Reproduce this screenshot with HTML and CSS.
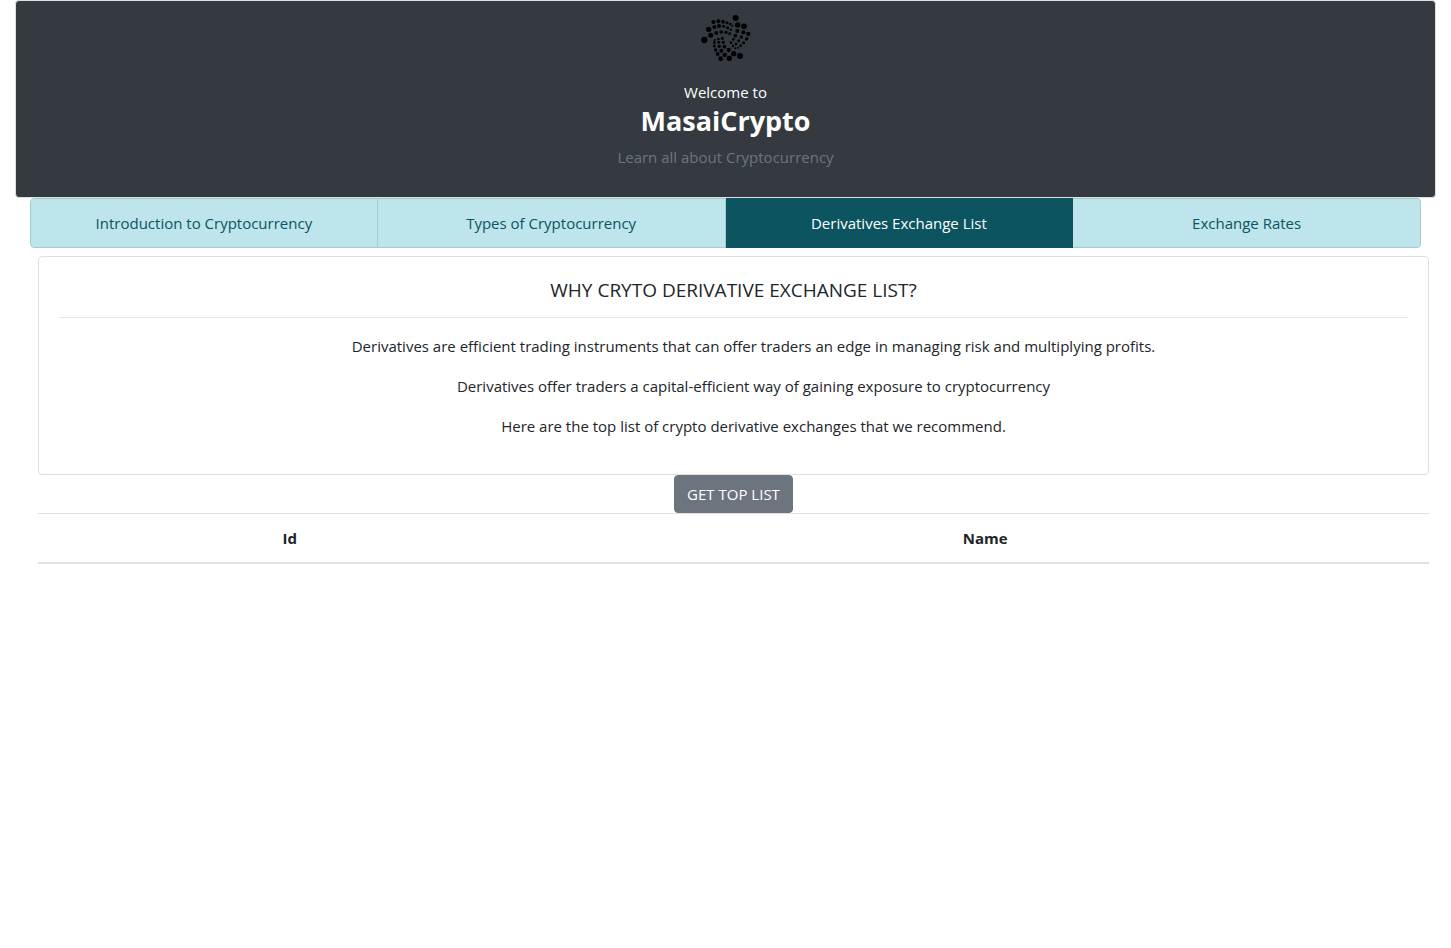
FILE: index.html
```html
<!DOCTYPE html>
<html lang="en">
<head>
<meta charset="utf-8">
<meta name="viewport" content="width=device-width, initial-scale=1">
<title>MasaiCrypto</title>
<link rel="stylesheet" href="styles.css">
</head>
<body>
<header class="hero">
  <svg class="logo" viewBox="2 0 180 168" role="img" aria-label="MasaiCrypto logo">
    <circle cx="121" cy="24" r="9"/><circle cx="127" cy="45" r="8"/><circle cx="146" cy="49" r="8.500"/><circle cx="159" cy="72" r="6.500"/><circle cx="144" cy="67" r="6"/><circle cx="126" cy="63" r="6"/><circle cx="154" cy="87" r="5"/><circle cx="138" cy="81" r="5"/><circle cx="120" cy="77" r="5.500"/><circle cx="145" cy="98" r="4.500"/><circle cx="130" cy="92" r="4.500"/><circle cx="114" cy="88" r="4"/><circle cx="136" cy="107" r="4"/><circle cx="122" cy="102" r="4"/><circle cx="107" cy="98" r="4"/><circle cx="128" cy="113" r="3"/><circle cx="113" cy="108" r="3.500"/><circle cx="120" cy="115" r="3"/>
    <circle cx="54" cy="36" r="6"/><circle cx="69" cy="34" r="6"/><circle cx="83" cy="35" r="5.500"/><circle cx="95" cy="38" r="4.500"/><circle cx="105" cy="42" r="4"/><circle cx="111" cy="48" r="3"/><circle cx="57" cy="51" r="6"/><circle cx="71" cy="48" r="6"/><circle cx="85" cy="49" r="5"/><circle cx="97" cy="53" r="4.500"/><circle cx="106" cy="59" r="3.500"/><circle cx="40" cy="58" r="8"/><circle cx="46" cy="76" r="7.500"/><circle cx="27" cy="90" r="9.500"/><circle cx="63" cy="69" r="6"/><circle cx="78" cy="66" r="5.500"/><circle cx="92" cy="67" r="5"/><circle cx="103" cy="71" r="4"/>
    <circle cx="58" cy="90" r="3"/><circle cx="69" cy="87" r="4"/><circle cx="81" cy="85" r="4.500"/><circle cx="57" cy="98" r="4"/><circle cx="70" cy="97" r="4.500"/><circle cx="84" cy="97" r="5"/><circle cx="57" cy="108" r="4.500"/><circle cx="72" cy="109" r="5"/><circle cx="87" cy="110" r="5.500"/><circle cx="61" cy="120" r="5"/><circle cx="78" cy="122" r="6"/><circle cx="67" cy="132" r="6"/><circle cx="88" cy="135" r="6.500"/><circle cx="76" cy="146" r="7"/><circle cx="102" cy="145" r="8"/><circle cx="100" cy="120" r="6.500"/><circle cx="115" cy="131" r="8"/><circle cx="134" cy="138" r="9"/>
  </svg>
  <p class="welcome">Welcome to</p>
  <h1 class="brand">MasaiCrypto</h1>
  <p class="tagline">Learn all about Cryptocurrency</p>
</header>
<nav class="tabs">
  <a class="tab" href="#introduction">Introduction to Cryptocurrency</a>
  <a class="tab" href="#types">Types of Cryptocurrency</a>
  <a class="tab active" href="#derivatives" aria-current="page">Derivatives Exchange List</a>
  <a class="tab" href="#rates">Exchange Rates</a>
</nav>
<main class="content" id="derivatives">
  <section class="card">
    <h2 class="card-title">WHY CRYTO DERIVATIVE EXCHANGE LIST?</h2>
    <div class="card-text">
      <p>Derivatives are efficient trading instruments that can offer traders an edge in managing risk and multiplying profits.</p>
      <p>Derivatives offer traders a capital-efficient way of gaining exposure to cryptocurrency</p>
      <p>Here are the top list of crypto derivative exchanges that we recommend.</p>
    </div>
  </section>
  <button class="get-list" type="button">GET TOP LIST</button>
  <table class="exchanges">
    <thead><tr><th class="col-id" scope="col">Id</th><th scope="col">Name</th></tr></thead>
    <tbody></tbody>
  </table>
</main>
</body>
</html>
```
FILE: styles.css
```css
*, *::before, *::after { box-sizing: border-box; }
body {
  margin: 0;
  background: #fff;
  color: #212529;
  font-family: "Segoe UI", "Open Sans", "Noto Sans", sans-serif;
  font-size: 15px;
  line-height: 24px;
  text-align: center;
}
h1, h2, p { margin: 0; }
.hero {
  margin: 0 15px;
  padding: 9px 20px 28px;
  background: #343a40;
  border: 1px solid #dfdfdf;
  border-radius: 4px;
  color: #fff;
}
.logo { display: block; width: 60px; height: 56px; margin: 0 auto 14px; fill: #000; }
.brand { margin-bottom: 7px; font-size: 27px; line-height: 34px; font-weight: 700; }
.tagline { color: #6c757d; }
.tabs {
  display: flex;
  margin: 0 30px;
  border-radius: 4px;
  overflow: hidden;
}
.tab {
  flex: 1 1 25%;
  padding: 12px 20px;
  background: #bee5eb;
  border: 1px solid #a3cbd1;
  border-left-width: 0;
  color: #0c5460;
  text-decoration: none;
}
.tab:first-child { border-left-width: 1px; border-radius: 4px 0 0 4px; }
.tab:last-child { border-radius: 0 4px 4px 0; }
.tab.active { background: #0c5460; border-color: #0c5460; color: #fff; }
.content { margin: 8px 22px 0 38px; }
.card {
  padding: 20px;
  border: 1px solid #dfdfdf;
  border-radius: 4px;
}
.card-title {
  padding: 1px 0 15px;
  border-bottom: 1px solid #e5e5e5;
  font-size: 19px;
  line-height: 24px;
  font-weight: 400;
}
.card-text { padding: 16px 0 0 40px; }
.card-text p { margin-bottom: 16px; }
.get-list {
  display: block;
  margin: 0 auto;
  padding: 6px 12px;
  border: 1px solid #6c757d;
  border-radius: 4px;
  background: #6c757d;
  color: #fff;
  font: inherit;
}
.exchanges { width: 100%; border-collapse: separate; border-spacing: 0; table-layout: fixed; }
.exchanges th {
  padding: 12px;
  border-top: 1px solid #dee2e6;
  border-bottom: 2px solid #dee2e6;
  font-weight: 700;
}
.exchanges .col-id { width: 36.2%; }
```
